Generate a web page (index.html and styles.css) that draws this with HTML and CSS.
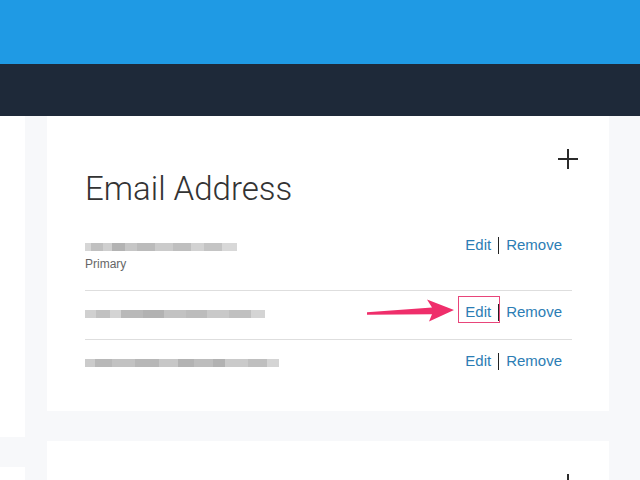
FILE: index.html
```html
<!DOCTYPE html>
<html lang="en">
<head>
<meta charset="utf-8">
<title>Email Address</title>
<link rel="stylesheet" href="styles.css">
</head>
<body>
<header class="topbar"></header>
<nav class="navbar"></nav>
<div class="layout">
  <aside class="sidebar">
    <div class="side-block tall"></div>
    <div class="side-block"></div>
  </aside>
  <main class="content">
    <section class="card">
      <div class="card-head">
        <button class="add-btn" aria-label="Add email">
          <svg width="20" height="20" viewBox="0 0 20 20"><path d="M10 0V20M0 10H20" stroke="#2b2b2b" stroke-width="2" fill="none"/></svg>
        </button>
      </div>
      <h2 class="card-title">Email Address</h2>
      <ul class="email-list">
        <li class="email-row first">
          <div class="email-info">
            <div class="email-line"><span class="email-blur e1"></span></div>
            <div class="email-tag">Primary</div>
          </div>
          <div class="actions">
            <a class="link">Edit</a><span class="sep"></span><a class="link">Remove</a>
          </div>
        </li>
        <li class="email-row">
          <div class="email-info">
            <div class="email-line"><span class="email-blur e2"></span></div>
          </div>
          <div class="actions annotated">
            <span class="highlight-box"></span>
            <svg class="pointer-arrow" width="92" height="26" viewBox="0 0 92 26">
              <polygon points="1,13.2 66,8.6 61,0.5 88,11 63,22.5 66,15.2 1,15.8" fill="#ef2e6b"/>
            </svg>
            <a class="link">Edit</a><span class="sep"></span><a class="link">Remove</a>
          </div>
        </li>
        <li class="email-row">
          <div class="email-info">
            <div class="email-line"><span class="email-blur e3"></span></div>
          </div>
          <div class="actions">
            <a class="link">Edit</a><span class="sep"></span><a class="link">Remove</a>
          </div>
        </li>
      </ul>
    </section>
    <section class="card short">
      <div class="card-head">
        <button class="add-btn" aria-label="Add">
          <svg width="20" height="20" viewBox="0 0 20 20"><path d="M10 0V20M0 10H20" stroke="#2b2b2b" stroke-width="2" fill="none"/></svg>
        </button>
      </div>
    </section>
  </main>
</div>
</body>
</html>
```

FILE: styles.css
```css
html, body {
  margin: 0;
  padding: 0;
}
body {
  background: #f7f8fa;
  font-family: "Liberation Sans", Arial, sans-serif;
  color: #333;
  height: 480px;
  overflow: hidden;
}
.topbar {
  height: 64px;
  background: #1f9ae4;
}
.navbar {
  height: 52px;
  background: #1e2939;
}
.layout {
  display: flex;
  gap: 22px;
  height: 364px;
  overflow: hidden;
}
.sidebar {
  width: 25px;
  display: flex;
  flex-direction: column;
  gap: 30px;
}
.side-block {
  background: #fff;
  height: 13px;
}
.side-block.tall {
  height: 321px;
}
.content {
  width: 562px;
  display: flex;
  flex-direction: column;
  gap: 30px;
}
.card {
  background: #fff;
  padding: 33px 31px 23px 38px;
}
.card.short {
  padding-bottom: 0;
  height: 10px;
}
.card-head {
  display: flex;
  justify-content: flex-end;
}
.add-btn {
  width: 20px;
  height: 20px;
  padding: 0;
  border: 0;
  background: none;
  display: block;
}
.add-btn svg {
  display: block;
}
.card-title {
  margin: 0;
  font-family: Roboto, "Liberation Sans", sans-serif;
  font-weight: 300;
  font-size: 33px;
  line-height: 40px;
  color: #333;
}
.email-list {
  list-style: none;
  margin: 15px 6px 0 0;
  padding: 0;
}
.email-row {
  display: flex;
  justify-content: space-between;
  align-items: flex-start;
  padding: 11px 0 17px;
  border-top: 1px solid #dedede;
}
.email-row.first {
  border-top: 0;
  padding-bottom: 18px;
}
.email-line {
  height: 20px;
  display: flex;
  align-items: center;
}
.email-blur {
  display: block;
  height: 8px;
  margin-top: 4px;
  filter: blur(0.6px);
}
.e1 {
  width: 152px;
  background: linear-gradient(90deg, #d6d6d6 0 4%, #c0c0c0 4% 12%, #cfcfcf 12% 18%, #b3b3b3 18% 26%, #c6c6c6 26% 34%, #bbb 34% 46%, #cbcbcb 46% 58%, #bfbfbf 58% 70%, #d2d2d2 70% 78%, #c4c4c4 78% 90%, #d8d8d8 90% 100%);
}
.e2 {
  width: 180px;
  background: linear-gradient(90deg, #d0d0d0 0 6%, #c1c1c1 6% 14%, #d4d4d4 14% 20%, #b9b9b9 20% 32%, #b2b2b2 32% 44%, #c2c2c2 44% 56%, #bcbcbc 56% 68%, #c9c9c9 68% 80%, #c0c0c0 80% 92%, #d4d4d4 92% 100%);
}
.e3 {
  width: 194px;
  background: linear-gradient(90deg, #cbcbcb 0 5%, #b8b8b8 5% 14%, #c2c2c2 14% 26%, #b7b7b7 26% 38%, #c7c7c7 38% 48%, #b3b3b3 48% 56%, #bdbdbd 56% 66%, #b2b2b2 66% 72%, #cacaca 72% 84%, #bfbfbf 84% 94%, #d4d4d4 94% 100%);
}
.email-tag {
  margin-top: 1px;
  font-size: 12px;
  line-height: 16px;
  color: #666;
}
.actions {
  display: flex;
  align-items: center;
  height: 20px;
  margin-right: 10px;
  font-size: 15px;
  line-height: 20px;
}
.link {
  color: #2c7db4;
  text-decoration: none;
  cursor: pointer;
}
.sep {
  width: 1px;
  height: 17px;
  background: #222;
  margin: 0 7px;
}
.annotated {
  position: relative;
}
.highlight-box {
  position: absolute;
  left: -7px;
  top: -6px;
  width: 40px;
  height: 25px;
  border: 1px solid #e8457a;
}
.pointer-arrow {
  position: absolute;
  left: -99px;
  top: -3px;
}
```
